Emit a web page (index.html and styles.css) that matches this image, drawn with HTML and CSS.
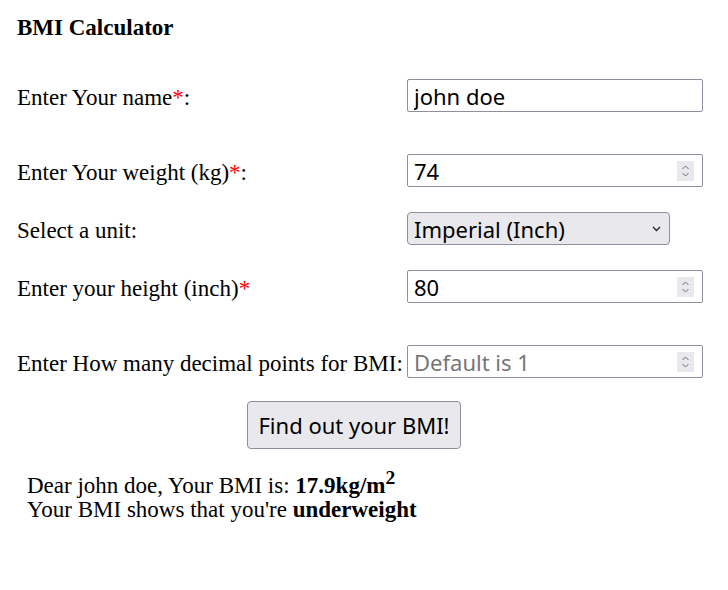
FILE: index.html
```html
<!DOCTYPE html>
<html>
<head>
<meta charset="utf-8">
<link rel="stylesheet" href="styles.css">
</head>
<body>
<div class="page">
  <h1 class="title">BMI Calculator</h1>
  <form class="form">
    <div class="row row-name">
      <label class="label">Enter Your name<span class="req">*</span>:</label>
      <div class="field"><input class="txt" type="text" value="john doe"></div>
    </div>
    <div class="row row-weight">
      <label class="label">Enter Your weight (kg)<span class="req">*</span>:</label>
      <div class="field"><input class="txt" type="text" value="74"><span class="spin"><svg width="9" height="14" viewBox="0 0 9 14"><path d="M1.5 5 L4.5 2 L7.5 5 M1.5 9 L4.5 12 L7.5 9" fill="none" stroke="#6d6d6d" stroke-width="1"/></svg></span></div>
    </div>
    <div class="row row-unit">
      <label class="label">Select a unit:</label>
      <div class="select"><span class="sel-text">Imperial (Inch)</span><svg class="chev" width="9" height="6" viewBox="0 0 9 6"><path d="M1 1 L4.5 4.5 L8 1" fill="none" stroke="#222" stroke-width="1.3"/></svg></div>
    </div>
    <div class="row row-height">
      <label class="label">Enter your height (inch)<span class="req">*</span></label>
      <div class="field"><input class="txt" type="text" value="80"><span class="spin"><svg width="9" height="14" viewBox="0 0 9 14"><path d="M1.5 5 L4.5 2 L7.5 5 M1.5 9 L4.5 12 L7.5 9" fill="none" stroke="#6d6d6d" stroke-width="1"/></svg></span></div>
    </div>
    <div class="row row-dec">
      <label class="label">Enter How many decimal points for BMI:</label>
      <div class="field"><input class="txt" type="text" placeholder="Default is 1"><span class="spin"><svg width="9" height="14" viewBox="0 0 9 14"><path d="M1.5 5 L4.5 2 L7.5 5 M1.5 9 L4.5 12 L7.5 9" fill="none" stroke="#6d6d6d" stroke-width="1"/></svg></span></div>
    </div>
    <div class="btn-row"><button class="btn" type="button">Find out your BMI!</button></div>
  </form>
  <div class="result">
    <div>Dear john doe, Your BMI is: <b>17.9kg/m<sup class="sq">2</sup></b></div>
    <div>Your BMI shows that you're <b>underweight</b></div>
  </div>
</div>
</body>
</html>
```
FILE: styles.css
```css
html, body {
  margin: 0;
  padding: 0;
  background: #fff;
}
body {
  font-family: "Liberation Serif", "Times New Roman", serif;
  color: #000;
}
.page {
  padding: 16px 17px;
}
.title {
  font-size: 23px;
  font-weight: bold;
  margin: 0;
  line-height: 24px;
}
.form {
  margin-top: 39px;
  display: flex;
  flex-direction: column;
}
.row {
  display: grid;
  grid-template-columns: 390px 296px;
  align-items: center;
  font-size: 23px;
}
.row-weight { margin-top: 42px; }
.row-unit { margin-top: 25px; }
.row-height { margin-top: 25px; }
.row-dec { margin-top: 42px; }
.label {
  line-height: 24px;
  padding-top: 4px;
  white-space: nowrap;
}
.req {
  color: #f00;
}
.field {
  height: 33px;
  box-sizing: border-box;
  border: 1px solid #8f8f9d;
  border-radius: 2px;
  display: flex;
  align-items: center;
  padding: 0 6px 0 6px;
  background: #fff;
}
.txt {
  flex: 1;
  min-width: 0;
  border: none;
  outline: none;
  padding: 0;
  margin: 0;
  font-family: "Noto Sans", "Open Sans", sans-serif;
  font-size: 22px;
  color: #000;
  background: transparent;
}
.txt::placeholder {
  color: #757575;
}
.spin {
  width: 17px;
  height: 20px;
  background: #e9e9ed;
  display: flex;
  align-items: center;
  justify-content: center;
  margin-right: 2px;
}
.select {
  width: 263px;
  height: 33px;
  box-sizing: border-box;
  border: 1px solid #8f8f9d;
  border-radius: 4px;
  background: #e9e9ed;
  display: flex;
  align-items: center;
  justify-content: space-between;
  padding: 0 8px 0 6px;
  font-family: "Noto Sans", "Open Sans", sans-serif;
  font-size: 22px;
}
.btn-row {
  display: flex;
  margin-top: 23px;
  padding-left: 230px;
}
.btn {
  width: 214px;
  height: 48px;
  border: 1px solid #8f8f9d;
  border-radius: 4px;
  background: #e9e9ed;
  font-family: "Noto Sans", "Open Sans", sans-serif;
  font-size: 22px;
  color: #000;
  padding: 0;
}
.result {
  margin-top: 25px;
  padding-left: 10px;
  font-size: 23px;
  line-height: 24px;
}
.sq {
  font-size: 0.85em;
  line-height: 0;
}
```
